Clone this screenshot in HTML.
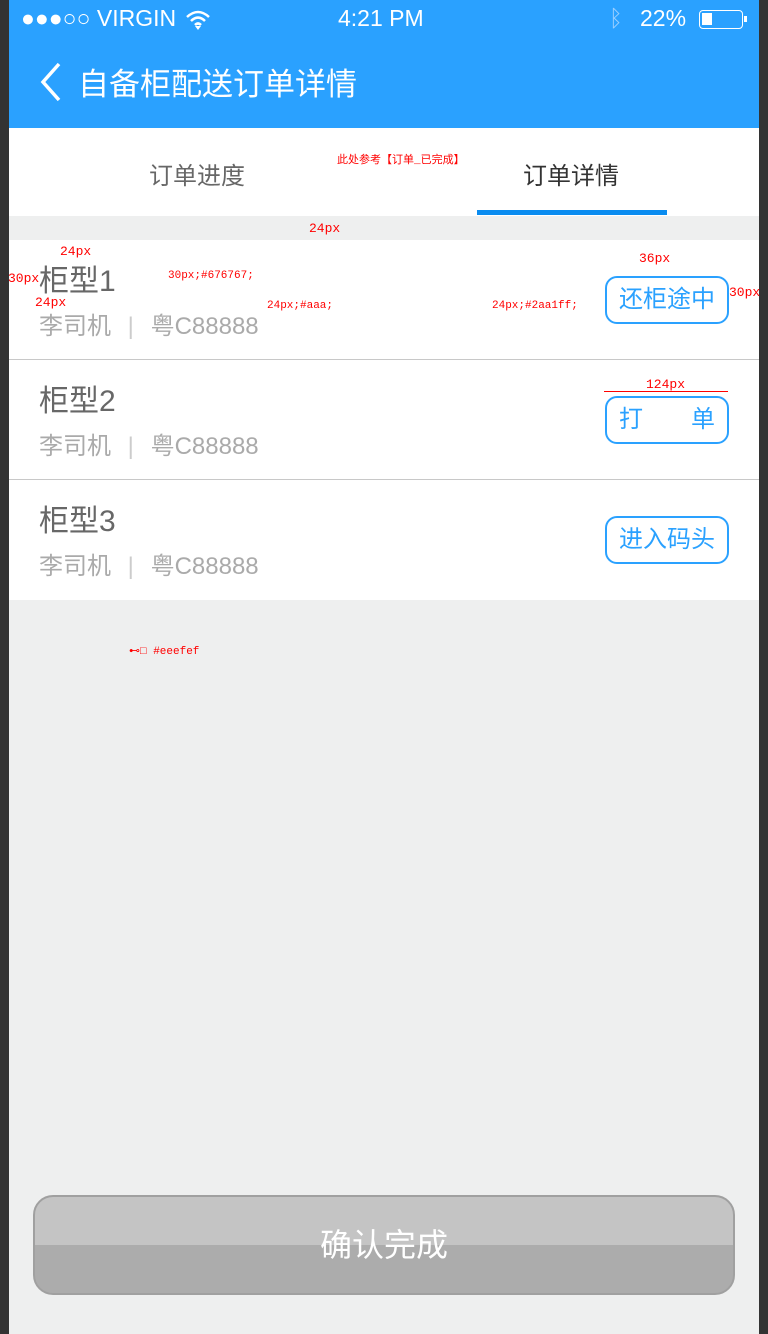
<!DOCTYPE html>
<html><head><meta charset="utf-8"><style>
*{margin:0;padding:0;box-sizing:border-box}
body{width:768px;height:1334px;background:#333;position:relative;overflow:hidden;font-family:"Liberation Sans","Noto Sans CJK SC",sans-serif}
.a{position:absolute}
.app{left:9px;top:0;width:750px;height:1334px;background:#eeefef}
.blue{left:0;top:0;width:750px;height:128px;background:#2aa1ff;color:#fff}
.tabs{left:0;top:128px;width:750px;height:88px;background:#fff}
.row{left:0;width:750px;height:120px;background:#fff;border-bottom:1px solid #c8c8c8}
.t{left:30px;top:16px;font-size:30px;color:#676767}
.s{left:30px;top:66px;font-size:24px;color:#aaa;white-space:nowrap}
.btn{left:596px;width:124px;height:48px;border:2px solid #2aa1ff;border-radius:12px;color:#2aa1ff;font-size:24px;text-align:center;line-height:44px}
.r{color:#f00;font-size:11px;font-family:"Liberation Mono","Noto Sans CJK SC",monospace}
</style></head><body>
<div class="a app">
 <div class="a blue">
  <div class="a" style="left:12px;top:5px;font-size:23px;white-space:nowrap">●●●○○ VIRGIN</div>
  <svg class="a" style="left:176px;top:9px" width="26" height="22"><path d="M2 8 Q13 -2 24 8 M6 12 Q13 5 20 12 M10 16 Q13 13 16 16" stroke="#fff" stroke-width="2.5" fill="none"/><path d="M13 21 L10 17 L16 17Z" fill="#fff"/></svg>
  <div class="a" style="left:329px;top:5px;font-size:23px">4:21 PM</div>
  <div class="a" style="left:600px;top:5px;font-size:23px;color:#9ccfff">ᛒ</div>
  <div class="a" style="left:631px;top:5px;font-size:23px">22%</div>
  <div class="a" style="left:690px;top:10px;width:44px;height:19px;border:1.5px solid #fff;border-radius:4px"><div style="margin:2px;width:10px;height:12px;background:#fff"></div></div>
  <div class="a" style="left:735px;top:16px;width:3px;height:6px;background:#fff"></div>
  <svg class="a" style="left:30px;top:62px" width="24" height="40"><path d="M20 2 L4 20 L20 38" stroke="#fff" stroke-width="3.5" fill="none"/></svg>
  <div class="a" style="left:69px;top:59px;font-size:31px">自备柜配送订单详情</div>
 </div>
 <div class="a tabs">
  <div class="a" style="left:140px;top:28px;font-size:24px;color:#676767">订单进度</div>
  <div class="a" style="left:514px;top:28px;font-size:24px;color:#333">订单详情</div>
  <div class="a" style="left:468px;top:82px;width:190px;height:5px;background:#0a8cf0"></div>
  <div class="a r" style="left:328px;top:23px">此处参考【订单_已完成】</div>
 </div>
 <div class="a row" style="top:240px">
  <div class="a t">柜型1</div><div class="a s">李司机 <span style="color:#ccc;margin:0 10px">|</span> 粤C88888</div>
  <div class="a btn" style="top:36px">还柜途中</div>
 </div>
 <div class="a row" style="top:360px">
  <div class="a t">柜型2</div><div class="a s">李司机 <span style="color:#ccc;margin:0 10px">|</span> 粤C88888</div>
  <div class="a btn" style="top:36px">打　　单</div>
 </div>
 <div class="a row" style="top:480px;border-bottom:none">
  <div class="a t">柜型3</div><div class="a s">李司机 <span style="color:#ccc;margin:0 10px">|</span> 粤C88888</div>
  <div class="a btn" style="top:36px">进入码头</div>
 </div>
 <div class="a r" style="left:120px;top:644px">⊷□ #eeefef</div>
 <div class="a" style="left:24px;top:1195px;width:702px;height:100px;border:2px solid #a0a0a0;border-radius:20px;overflow:hidden;background:linear-gradient(#c4c4c4 0,#c4c4c4 50%,#acacac 50%)">
  <div style="text-align:center;line-height:96px;font-size:32px;color:#fff">确认完成</div>
 </div>
</div>
<div class="a r" style="left:60px;top:244px;font-size:13px">24px</div>
<div class="a r" style="left:309px;top:221px;font-size:13px">24px</div>
<div class="a r" style="left:8px;top:271px;font-size:13px">30px</div>
<div class="a r" style="left:35px;top:295px;font-size:13px">24px</div>
<div class="a r" style="left:168px;top:270px">30px;#676767;</div>
<div class="a r" style="left:267px;top:300px">24px;#aaa;</div>
<div class="a r" style="left:492px;top:300px">24px;#2aa1ff;</div>
<div class="a r" style="left:639px;top:251px;font-size:13px">36px</div>
<div class="a r" style="left:729px;top:285px;font-size:13px">30px</div>
<div class="a r" style="left:646px;top:377px;font-size:13px">124px</div>
<div class="a" style="left:604px;top:391px;width:124px;height:1px;background:#f00"></div>
</body></html>
